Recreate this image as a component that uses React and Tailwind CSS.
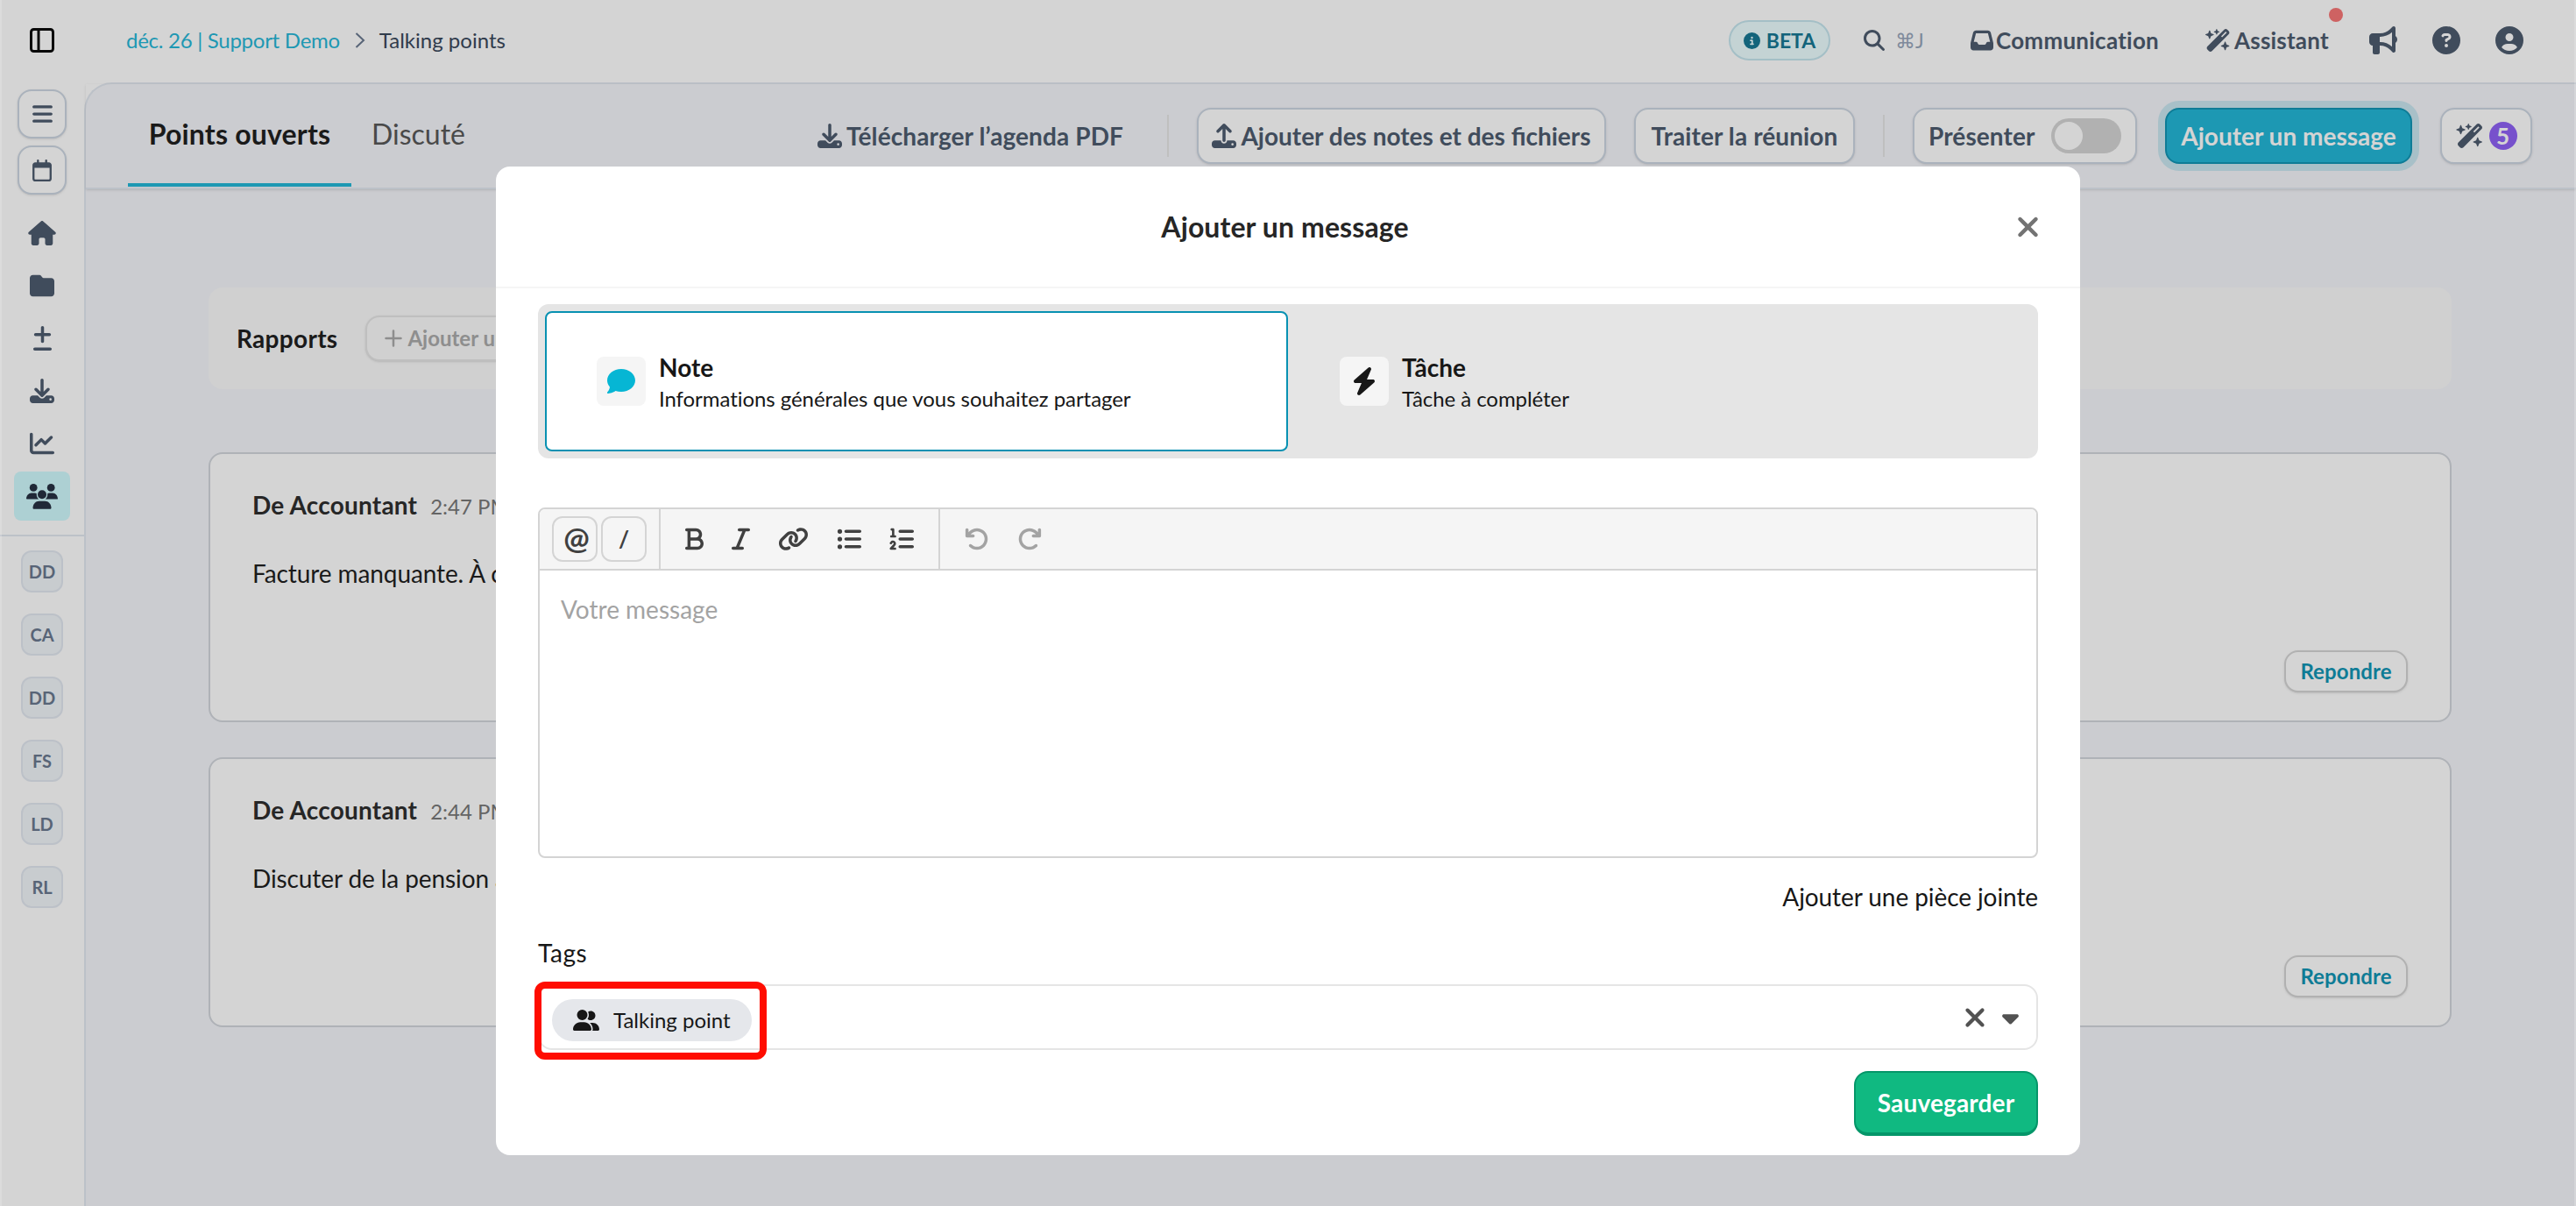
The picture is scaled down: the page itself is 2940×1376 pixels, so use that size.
import React, { useState } from "react";
import {
  FaArrowRotateLeft,
  FaArrowRotateRight,
  FaBars,
  FaBold,
  FaBolt,
  FaBullhorn,
  FaCaretDown,
  FaChartLine,
  FaCircleInfo,
  FaCircleQuestion,
  FaCircleUser,
  FaComment,
  FaDownload,
  FaFolder,
  FaHouse,
  FaInbox,
  FaItalic,
  FaLink,
  FaListOl,
  FaListUl,
  FaMagnifyingGlass,
  FaPlusMinus,
  FaRegCalendar,
  FaUpload,
  FaUserGroup,
  FaWandMagicSparkles,
  FaXmark,
} from "react-icons/fa6";

const clients = ["DD", "CA", "DD", "FS", "LD", "RL"];

const messages = [
  { time: "2:47 PM", text: "Facture manquante. À compléter" },
  { time: "2:44 PM", text: "Discuter de la pension avec le client" },
];

const PanelIcon = () => (
  <svg viewBox="0 0 28 28" className="h-7 w-7" fill="none" stroke="#000" strokeWidth="3">
    <rect x="1.5" y="1.5" width="25" height="25" rx="3" />
    <path d="M10 1.5v25" />
  </svg>
);

// Two people behind, one in front
const MeetingIcon = () => (
  <svg viewBox="0 0 36 29" className="h-[29px] w-9" fill="currentColor">
    <circle cx="8.2" cy="4.4" r="4.4" />
    <circle cx="28.2" cy="4.4" r="4.4" />
    <path d="M0 17.5C0 13.5 2.6 10.5 6 10.5h3.6c.8 0 1.6.2 2.2.5-.3 2.6.6 5 2.4 6.5H.8c-.5 0-.8-.4-.8-.8z" />
    <path d="M36 17.5c0-4-2.6-7-6-7h-3.6c-.8 0-1.600.2-2.2.5.3 2.6-.6 5-2.4 6.5h13.6c.5 0 .6-.4.6-.8z" />
    <circle cx="18" cy="12.300" r="5" />
    <path d="M7.500 27.500c0-4.300 3.200-7.800 7.200-7.800h6.600c4 0 7.200 3.500 7.200 7.800 0 .8-.6 1.300-1.300 1.300H8.800c-.7 0-1.300-.5-1.300-1.300z" />
  </svg>
);

const Sidebar = () => (
  <aside className="flex w-24 shrink-0 flex-col items-center bg-white text-[#475569]">
    <div className="flex h-[92px] items-center">
      <PanelIcon />
    </div>
    <div className="mt-2.5 flex flex-col gap-2">
      <button className="flex h-14 w-14 items-center justify-center rounded-2xl border-2 border-[#cbd5e1] bg-white shadow">
        <FaBars className="h-[26px] w-[23px]" />
      </button>
      <button className="flex h-14 w-14 items-center justify-center rounded-2xl border-2 border-[#cbd5e1] bg-white shadow">
        <FaRegCalendar className="h-[25px] w-[22px]" />
      </button>
    </div>

    <nav className="mt-3 flex flex-col items-center">
      <div className="flex h-16 items-center">
        <FaHouse className="h-7 w-8" />
      </div>
      <div className="flex h-14 items-center">
        <FaFolder className="h-7 w-7" />
      </div>
      <div className="flex h-16 items-center">
        <FaPlusMinus className="h-7 w-[21px]" />
      </div>
      <div className="flex h-14 items-center">
        <FaDownload className="h-7 w-7" />
      </div>
      <div className="flex h-16 items-center">
        <FaChartLine className="h-7 w-7" />
      </div>
      <a className="flex h-14 w-16 items-center justify-center rounded-lg bg-[#cffafe] text-[#1e293b]">
        <MeetingIcon />
      </a>
    </nav>

    <div className="mt-4 flex w-full flex-col items-center gap-6 border-t-2 border-[#e2e8f0] pt-4">
      {clients.map((name, i) => (
        <span
          key={i}
          className="flex h-12 w-12 items-center justify-center rounded-xl border-2 border-[#e2e8f0] bg-[#f1f5f9] text-[20px] font-bold text-[#64748b]"
        >
          {name}
        </span>
      ))}
    </div>
  </aside>
);

const TopBar = () => (
  <header className="flex h-[94px] items-center bg-white pb-0.5 pl-12 pr-[60px] text-[#475569]">
    <div className="flex items-center text-[24px]">
      <a className="tracking-[-0.27px] text-[#1bb4d6]">déc. 26 | Support Demo</a>
      <svg viewBox="0 0 12 18" className="mr-4 ml-[17px] h-[18px] w-3" fill="none" stroke="#64748b" strokeWidth="2">
        <path d="M1.500 1l8.500 8-8.500 8" />
      </svg>
      <span className="text-[#334155]">Talking points</span>
    </div>

    <div className="ml-auto flex items-center">
      <span className="flex h-[46px] w-[116px] items-center justify-center gap-[7px] rounded-full border-2 border-[#c3e5ee] bg-[#ecfeff] text-[23px] font-bold text-[#0e7490]">
        <FaCircleInfo className="h-[19px] w-[19px]" />
        BETA
      </span>
      <div className="ml-[38px] flex w-[122px] items-center gap-3">
        <FaMagnifyingGlass className="h-6 w-6" />
        <span className="text-[23px] text-[#94a3b8]">⌘J</span>
      </div>
      <a className="flex w-[268px] items-center gap-[3px] text-[26px] font-bold tracking-[0.25px]">
        <FaInbox className="h-[26px] w-[26px]" />
        Communication
      </a>
      <a className="relative flex w-[187px] items-center gap-1 text-[26px] font-bold tracking-[0.2px]">
        <FaWandMagicSparkles className="h-[26px] w-[29px]" />
        Assistant
        <span className="absolute -top-[18px] left-[141px] h-4 w-4 rounded-full bg-[#f87171]" />
      </a>
      <div className="flex items-center gap-10">
        <FaBullhorn className="h-8 w-8" />
        <FaCircleQuestion className="h-8 w-8" />
        <FaCircleUser className="h-8 w-8" />
      </div>
    </div>
  </header>
);

const ActionBar = () => (
  <div className="flex h-[120px] shrink-0 items-center border-b-2 border-[#e2e8f0] pl-12 pr-[50px] text-[28px] font-bold text-[#475569] shadow-sm">
    <div className="flex h-full pt-px text-[32px]">
      <div className="flex w-[255px] flex-col">
        <div className="flex h-[112px] items-center justify-center pb-px tracking-[0.2px] text-[#171717]">
          Points ouverts
        </div>
        <div className="h-1 bg-[#1bb4d6]" />
      </div>
      <div className="ml-[23px] flex h-[112px] items-center pb-px font-normal text-[#525252]">Discuté</div>
    </div>

    <div className="ml-auto flex items-center">
      <a className="flex items-center gap-[5px] tracking-[0.1px]">
        <FaDownload className="h-7 w-7" />
        Télécharger l’agenda PDF
      </a>
      <div className="ml-[50px] h-12 w-0.5 bg-[#e5e5e5]" />
      <button className="ml-8 flex h-16 w-[467px] items-center justify-center gap-[5px] rounded-2xl border-2 border-[#cbd5e1] bg-white shadow">
        <FaUpload className="h-7 w-7" />
        Ajouter des notes et des fichiers
      </button>
      <button className="ml-8 flex h-16 w-[252px] items-center justify-center rounded-2xl border-2 border-[#cbd5e1] bg-white tracking-[0.1px] shadow">
        Traiter la réunion
      </button>
      <div className="ml-8 h-12 w-0.5 bg-[#e5e5e5]" />
      <button className="ml-8 flex h-16 w-64 items-center justify-between rounded-2xl border-2 border-[#cbd5e1] bg-white px-4 tracking-[0.1px] shadow">
        Présenter
        <span className="flex h-10 w-20 items-center rounded-full bg-[#d4d4d4] p-1">
          <span className="h-8 w-8 rounded-full bg-white" />
        </span>
      </button>
      <button className="ml-8 flex h-16 w-[282px] items-center justify-center rounded-2xl border-2 border-[#0891b2] bg-[#1bb4d6] text-white ring-8 ring-[#c8e6f0]">
        Ajouter un message
      </button>
      <button className="ml-8 flex h-16 w-[105px] items-center justify-center gap-[6px] rounded-2xl border-2 border-[#cbd5e1] bg-white shadow">
        <FaWandMagicSparkles className="h-7 w-8" />
        <span className="flex h-8 w-8 items-center justify-center rounded-full bg-[#8b5cf6] text-[26px] text-white">5</span>
      </button>
    </div>
  </div>
);

const MessageCard = ({ time, text }) => (
  <article className="flex h-[308px] flex-col rounded-2xl border-2 border-[#d1d5db] bg-white px-12 pt-[38px] pb-8">
    <div className="flex items-baseline gap-[15px] text-[28px] leading-10">
      <span className="font-bold tracking-[0.2px] text-[#262626]">De Accountant</span>
      <span className="text-[24px] text-[#737373]">{time}</span>
    </div>
    <p className="mt-9 text-[28px] leading-10 tracking-[-0.1px] text-[#171717]">{text}</p>
    <button className="mt-auto flex h-12 w-[141px] items-center justify-center self-end rounded-2xl border-2 border-[#d4d4d4] bg-white text-[24px] font-bold tracking-[0.1px] text-[#0891b2] shadow">
      Repondre
    </button>
  </article>
);

const MeetingPage = () => (
  <section className="flex flex-1 flex-col rounded-tl-[32px] border-t-2 border-l-2 border-[#e2e8f0] bg-[#f4f5fa]">
    <ActionBar />
    <div className="mt-28 flex flex-col pl-[140px] pr-[142px]">
      <div className="flex h-[116px] items-center rounded-2xl bg-[#fafafa] pl-8">
        <span className="text-[28px] font-bold tracking-[0.3px] text-[#171717]">Rapports</span>
        <button className="ml-8 flex h-[52px] items-center gap-1.5 rounded-2xl border-2 border-[#e5e5e5] bg-[#fafafa] px-5 text-[24px] font-bold text-[#a8a8a8] shadow-sm">
          <svg viewBox="0 0 20 20" className="h-5 w-5" fill="none" stroke="currentColor" strokeWidth="2.500" strokeLinecap="round">
            <path d="M10 1.500v17M1.500 10h17" />
          </svg>
          Ajouter un rapport
        </button>
      </div>
      <div className="mt-[72px] flex flex-col gap-10">
        {messages.map((m) => (
          <MessageCard key={m.time} {...m} />
        ))}
      </div>
    </div>
  </section>
);

const TypeOption = ({ active, icon, title, subtitle, onClick }) => (
  <button
    onClick={onClick}
    className={`flex h-40 flex-1 items-center gap-[15px] rounded-lg border-2 px-[57px] text-left text-[#171717] ${
      active ? "border-[#0891b2] bg-white" : "border-transparent"
    }`}
  >
    <span className="flex h-14 w-14 items-center justify-center rounded-lg bg-[#f5f5f5]">{icon}</span>
    <span className="flex flex-col pt-1">
      <span className="text-[28px] font-bold leading-9">{title}</span>
      <span className="text-[24px] leading-9 tracking-[-0.06px]">{subtitle}</span>
    </span>
  </button>
);

const Editor = () => (
  <div className="mt-14 flex h-[400px] flex-col rounded-lg border-2 border-[#d4d4d4]">
    <div className="flex h-[70px] items-stretch rounded-t-md border-b-2 border-[#d4d4d4] bg-[#f5f5f5] text-[#404040]">
      <div className="flex items-center gap-1 border-r-2 border-[#d4d4d4] px-3.5 font-bold">
        <button className="flex h-[52px] w-[52px] items-center justify-center rounded-xl border-2 border-[#d4d4d4] pb-1 pl-1 text-[35px] leading-none">
          @
        </button>
        <button className="flex h-[52px] w-[52px] items-center justify-center rounded-xl border-2 border-[#d4d4d4] text-[26px]">
          /
        </button>
      </div>
      <div className="flex items-center gap-8 border-r-2 border-[#d4d4d4] px-7">
        <FaBold className="h-7 w-[21px]" />
        <FaItalic className="h-7 w-[21px]" />
        <FaLink className="h-7 w-[35px]" />
        <FaListUl className="h-7 w-7" />
        <FaListOl className="h-7 w-7" />
      </div>
      <div className="flex items-center gap-8 px-7 text-[#a3a3a3]">
        <FaArrowRotateLeft className="h-7 w-7" />
        <FaArrowRotateRight className="h-7 w-7" />
      </div>
    </div>
    <div className="px-6 pt-6 text-[28px] leading-10 text-[#a3a3a3]">Votre message</div>
  </div>
);

const MessageModal = () => {
  const [type, setType] = useState("note");

  return (
    <div className="absolute left-[566px] top-[190px] flex h-[1128px] w-[1808px] flex-col rounded-2xl bg-white text-[#171717]">
      <div className="flex h-[139px] items-center border-b-2 border-[#f5f5f5] pl-[66px] pr-[46px]">
        <h2 className="flex-1 text-center text-[32px] font-bold tracking-[0.1px] text-[#262626]">Ajouter un message</h2>
        <FaXmark className="h-9 w-[27px] text-[#737373]" />
      </div>

      <div className="flex flex-col px-12 pt-[18px]">
        <div className="flex rounded-xl bg-[#e5e5e5] p-2">
          <TypeOption
            active={type === "note"}
            onClick={() => setType("note")}
            icon={<FaComment className="h-8 w-8 text-[#06b6d4]" />}
            title="Note"
            subtitle="Informations générales que vous souhaitez partager"
          />
          <TypeOption
            active={type === "task"}
            onClick={() => setType("task")}
            icon={<FaBolt className="h-8 w-7" />}
            title="Tâche"
            subtitle="Tâche à compléter"
          />
        </div>

        <Editor />

        <a className="mt-6 self-end text-[28px] leading-10 tracking-[-0.08px]">Ajouter une pièce jointe</a>

        <label className="mt-6 text-[28px] leading-10 tracking-[0.6px]">Tags</label>
        <div className="relative mt-4 flex h-[75px] items-center rounded-2xl border-2 border-[#e5e5e5] pl-3.5 pr-5">
          <span className="mt-[7px] flex h-12 items-center gap-4 rounded-full bg-[#e5e7eb] px-6 text-[24px]">
            <FaUserGroup className="h-6 w-[30px]" />
            Talking point
          </span>
          <FaXmark className="ml-auto h-[34px] w-[26px] text-[#525252]" />
          <FaCaretDown className="ml-[18px] h-[30px] w-[19px] text-[#525252]" />
          {/* highlight frame */}
          <div className="absolute -left-1.5 -top-[5px] h-[89px] w-[265px] rounded-[12px] border-8 border-[#ff0d00]" />
        </div>

        <button className="mt-6 flex h-[74px] w-[210px] items-center justify-center self-end rounded-2xl border-2 border-b-4 border-[#059669] bg-[#10b981] text-[28px] font-bold tracking-[0.15px] text-white">
          Sauvegarder
        </button>
      </div>
    </div>
  );
};

const App = () => {
  return (
    <div className="relative flex h-[1376px] w-[2940px] overflow-hidden bg-white font-['Lato',sans-serif]">
      <Sidebar />
      <main className="flex flex-1 flex-col">
        <TopBar />
        <MeetingPage />
      </main>
      <div className="absolute inset-0 border-x-2 border-white/20 bg-[#262626]/20" />
      <MessageModal />
    </div>
  );
};

export default App;
